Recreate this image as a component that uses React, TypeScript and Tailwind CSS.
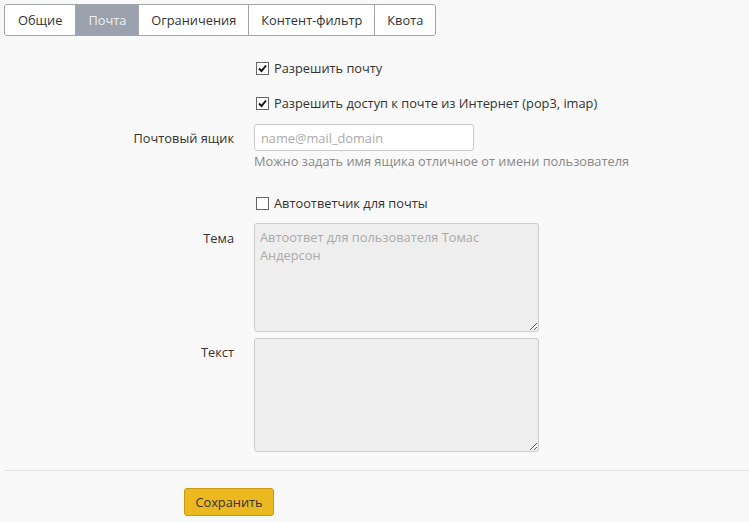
import React, { useState } from 'react';

const tabs = ['Общие', 'Почта', 'Ограничения', 'Контент-фильтр', 'Квота'];

const Check: React.FC<{ checked: boolean; onChange: () => void; label: string }> = ({ checked, onChange, label }) => (
  <label className="flex items-center h-[20px] cursor-pointer select-none" onClick={onChange}>
    <span className="w-[13px] h-[13px] ml-[2px] mr-[5px] border border-[#666] bg-white flex items-center justify-center">
      {checked && (
        <svg width="9" height="9" viewBox="0 0 9 9">
          <path d="M1 4.5 L3.5 7 L8 1.5" fill="none" stroke="#111" strokeWidth="1.9" />
        </svg>
      )}
    </span>
    <span>{label}</span>
  </label>
);

export default function App() {
  const [tab, setTab] = useState(1);
  const [allowMail, setAllowMail] = useState(true);
  const [allowNet, setAllowNet] = useState(true);
  const [auto, setAuto] = useState(false);

  return (
    <div className="min-h-screen bg-[#f9f9f9] text-[12.8px] leading-[18px] text-[#333]" style={{ fontFamily: '"Open Sans", sans-serif' }}>
      <div className="pt-[4px] pl-[4px]">
        <div className="inline-flex h-[32px] border border-[#a0a4ab] rounded-[3px] bg-white overflow-hidden">
          {tabs.map((t, i) => (
            <button
              key={t}
              onClick={() => setTab(i)}
              className={`h-full ${i > 0 ? 'px-[12px] border-l border-[#a0a4ab]' : 'px-[13px]'} ${
                tab === i ? 'bg-[#9ba1ad] text-[#eef0f3]' : 'bg-white text-[#333]'
              }`}
            >
              {t}
            </button>
          ))}
        </div>
      </div>

      <div className="grid grid-cols-[234px_1fr] gap-x-[20px] mt-[22px]">
        <div />
        <Check checked={allowMail} onChange={() => setAllowMail(!allowMail)} label="Разрешить почту" />

        <div />
        <div className="mt-[15px]">
          <Check checked={allowNet} onChange={() => setAllowNet(!allowNet)} label="Разрешить доступ к почте из Интернет (pop3, imap)" />
        </div>

        <div className="mt-[11px] h-[27px] flex items-center justify-end">Почтовый ящик</div>
        <div className="mt-[11px]">
          <input
            placeholder="name@mail_domain"
            className="w-[220px] h-[27px] px-[6px] border border-[#ccc] rounded-[3px] bg-white outline-none placeholder:text-[#aaa]"
          />
          <div className="mt-[1px] text-[#888]">Можно задать имя ящика отличное от имени пользователя</div>
        </div>

        <div />
        <div className="mt-[23px]">
          <Check checked={auto} onChange={() => setAuto(!auto)} label="Автоответчик для почты" />
        </div>

        <div className="mt-[10px] pt-[6px] text-right">Тема</div>
        <div className="mt-[10px]">
          <textarea
            readOnly={!auto}
            defaultValue="Автоответ для пользователя Томас Андерсон"
            className="block w-[285px] h-[109px] px-[5px] py-[4px] border border-[#ccc] rounded-[3px] bg-[#eee] text-[#aaa] outline-none"
          />
        </div>

        <div className="mt-[6px] pt-[5px] text-right">Текст</div>
        <div className="mt-[6px]">
          <textarea
            readOnly={!auto}
            className="block w-[285px] h-[114px] px-[5px] py-[4px] border border-[#ccc] rounded-[3px] bg-[#eee] text-[#aaa] outline-none"
          />
        </div>
      </div>

      <div className="ml-[4px] mt-[18px] border-t border-[#e3e3e3]" />

      <div className="pl-[184px] pt-[17px] pb-[7px]">
        <button className="w-[90px] h-[28px] bg-[#ecb820] border border-[#c9980f] rounded-[3px] text-[#333]">
          Сохранить
        </button>
      </div>
    </div>
  );
}
